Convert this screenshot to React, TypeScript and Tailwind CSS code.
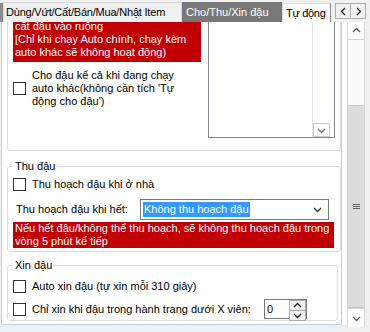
import React from 'react';

const Check = () => (
  <span className="block w-[13px] h-[13px] shrink-0 border border-[#333333] bg-white" />
);

const Chev = ({ dir, className = '' }: { dir: 'up' | 'down' | 'left' | 'right'; className?: string }) => {
  const pts = {
    up: '1,6 4.5,2.5 8,6',
    down: '1,3 4.5,6.5 8,3',
    left: '6,1 2.5,4.5 6,8',
    right: '3,1 6.5,4.5 3,8',
  }[dir];
  return (
    <svg width="9" height="9" viewBox="0 0 9 9" className={className}>
      <polyline points={pts} fill="none" stroke="currentColor" strokeWidth="1.3" />
    </svg>
  );
};

const TabStrip = () => (
  <div className="flex h-[22px] items-end">
    <div className="w-[3px] h-[19px] bg-[#8c8c8c]" />
    <div className="w-[179px] h-[20px] pl-[2px] leading-[19px] tracking-[-0.2px] whitespace-nowrap bg-[#f0f0f0] border border-b-0 border-[#d9d9d9]">
      Dùng/Vứt/Cất/Bán/Mua/Nhật Item
    </div>
    <div className="w-[100px] h-[20px] pl-[4px] leading-[20px] whitespace-nowrap bg-[#787878] text-white">Cho/Thu/Xin đậu</div>
    <div className="w-[49px] h-[19px] pl-[3px] leading-[18px] tracking-[-0.3px] whitespace-nowrap bg-[#fbfbfb] border border-b-0 border-[#d9d9d9] border-r-[#8a8a8a]">
      Tự động
    </div>
    <div className="self-start mt-[3px] ml-[4px] flex">
      <div className="w-[16px] h-[16px] flex items-center justify-center bg-[#f0f0f0] border border-[#adadad] text-[#222]">
        <Chev dir="left" />
      </div>
      <div className="w-[16px] h-[16px] -ml-px flex items-center justify-center bg-[#f0f0f0] border border-[#adadad] text-[#222]">
        <Chev dir="right" />
      </div>
    </div>
  </div>
);

const ScrollBar = () => (
  <div className="w-[18px] h-[305px] flex flex-col bg-[#fafafa] border-x border-[#d4d4d4]">
    <div className="h-[18px] flex items-center justify-center border-b border-[#d4d4d4] bg-white text-[#606060]">
      <Chev dir="up" />
    </div>
    <div className="h-[65px]" />
    <div className="h-[203px] flex flex-col items-center justify-center gap-[1px] bg-[#dcdcdc] border-y border-[#c4c4c4]">
      <span className="block w-[7px] h-px bg-[#606060]" />
      <span className="block w-[7px] h-px bg-[#606060]" />
      <span className="block w-[7px] h-px bg-[#606060]" />
    </div>
    <div className="flex-1 flex items-center justify-center border-t border-[#d4d4d4] bg-white text-[#606060]">
      <Chev dir="down" />
    </div>
  </div>
);

export default function App() {
  return (
    <div className="w-[370px] h-[332px] overflow-hidden bg-[#f0f0f0] text-black text-[11px] leading-[13px] font-['Liberation_Sans',Arial,sans-serif]">
      <TabStrip />
      <div className="flex items-start">
        <div className="ml-px w-[341px] h-[303px] overflow-hidden bg-white border-l border-r border-b border-[#b9d1ea]">
          {/* Cho đậu (scrolled) */}
          <div className="ml-[5px] w-[334px] h-[129px] flex items-start border-x border-b border-[#dcdcdc] rounded-b-[3px]">
            <div className="ml-[5px] w-[195px]">
              <div className="-mt-[2px] w-[188px] px-[2px] pb-[3px] bg-[#c00000] text-white">
                <div>cất đậu vào ruộng</div>
                <div>[Chỉ khi chạy Auto chính, chạy kèm</div>
                <div>auto khác sẽ không hoạt động)</div>
              </div>
              <div className="mt-[7px] flex items-center gap-[6px]">
                <Check />
                <div className="w-[150px]">Cho đậu kể cả khi đang chạy auto khác(không cần tích 'Tự động cho đậu')</div>
              </div>
            </div>
            <div className="-mt-[12px] w-[127px] h-[128px] flex justify-end border border-[#828790] bg-white">
              <div className="w-[18px] flex flex-col justify-end border-l border-[#e3e3e3] mr-[4px]">
                <div className="h-[14px] flex items-center justify-center border border-[#cfcfcf] text-[#777]">
                  <Chev dir="down" />
                </div>
              </div>
            </div>
          </div>

          {/* Thu đậu */}
          <fieldset className="mt-[9px] ml-[5px] w-[334px] px-[5px] pb-[3px] border border-[#dcdcdc] rounded-[3px]">
            <legend className="px-[2px]">Thu đậu</legend>
            <div className="mt-[5px] flex items-center gap-[6px]">
              <Check />
              <span>Thu hoạch đậu khi ở nhà</span>
            </div>
            <div className="mt-[8px] flex items-center pl-[3px]">
              <span className="w-[124px]">Thu hoạch đậu khi hết:</span>
              <div className="w-[189px] h-[21px] flex items-center justify-between pl-[2px] pr-[6px] border border-[#7a7a7a] bg-white">
                <span className="px-[1px] leading-[15px] bg-[#3399ff] text-white">Không thu hoạch đậu</span>
                <Chev dir="down" className="text-[#333]" />
              </div>
            </div>
            <div className="mt-[2px] w-[321px] px-[2px] bg-[#c00000] text-white">
              <div>Nếu hết đậu/không thể thu hoạch, sẽ không thu hoạch đậu trong</div>
              <div>vòng 5 phút kế tiếp</div>
            </div>
          </fieldset>

          {/* Xin đậu */}
          <fieldset className="mt-[7px] ml-[5px] w-[331px] px-[5px] pb-px border border-[#dcdcdc] rounded-[3px]">
            <legend className="px-[2px]">Xin đậu</legend>
            <div className="mt-[8px] flex items-center gap-[6px]">
              <Check />
              <span>Auto xin đậu (tự xin mỗi 310 giây)</span>
            </div>
            <div className="mt-[6px] h-[20px] flex items-center gap-[6px]">
              <Check />
              <span className="w-[226px]">Chỉ xin khi đậu trong hành trang dưới X viên:</span>
              <div className="w-[43px] h-[20px] flex border border-[#7a7a7a] bg-white">
                <span className="flex-1 pl-[2px] leading-[18px]">0</span>
                <div className="w-[17px] flex flex-col">
                  <div className="flex-1 flex items-center justify-center bg-[#f0f0f0] border border-[#adadad] text-[#222]">
                    <Chev dir="up" />
                  </div>
                  <div className="flex-1 flex items-center justify-center bg-[#f0f0f0] border border-t-0 border-[#adadad] text-[#222]">
                    <Chev dir="down" />
                  </div>
                </div>
              </div>
            </div>
          </fieldset>
        </div>
        <div className="w-[5px] h-[303px] bg-white" />
        <ScrollBar />
      </div>
    </div>
  );
}
